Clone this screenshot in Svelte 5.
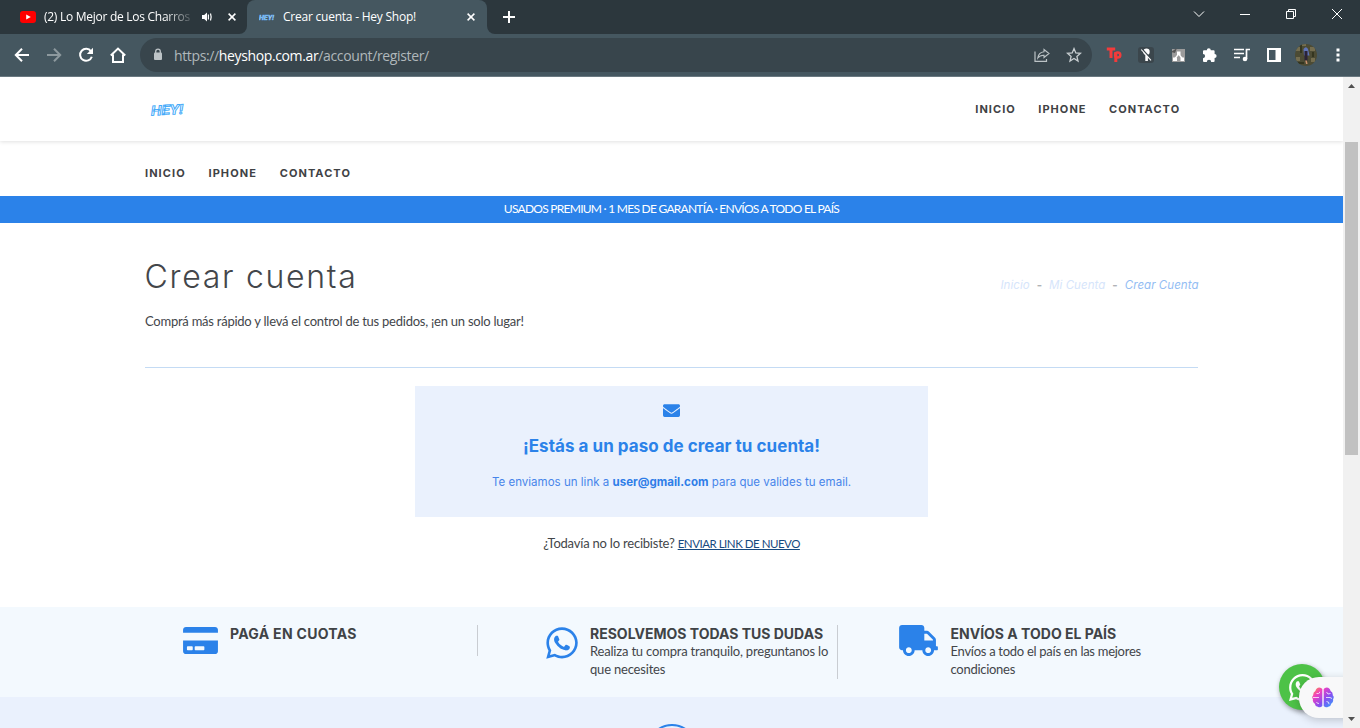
<script>
  const links = ['INICIO', 'IPHONE', 'CONTACTO'];

  const whatsapp = 'M380.9 97.1C339 55.1 283.2 32 223.9 32c-122.4 0-222 99.6-222 222 0 39.1 10.2 77.3 29.6 111L0 480l117.7-30.9c32.4 17.7 68.9 27 106.1 27h.1c122.3 0 224.1-99.6 224.1-222 0-59.3-25.2-115-67.1-157zm-157 341.6c-33.2 0-65.7-8.9-94-25.7l-6.7-4-69.8 18.3L72 359.2l-4.4-7c-18.5-29.4-28.2-63.3-28.2-98.2 0-101.7 82.8-184.5 184.6-184.5 49.3 0 95.6 19.2 130.4 54.1 34.8 34.9 56.2 81.2 56.1 130.5 0 101.8-84.9 184.6-186.6 184.6zm101.2-138.2c-5.5-2.8-32.8-16.2-37.9-18-5.1-1.9-8.8-2.8-12.5 2.8-3.7 5.6-14.3 18-17.6 21.8-3.2 3.7-6.5 4.2-12 1.4-32.6-16.3-54-29.1-75.5-66-5.7-9.8 5.7-9.1 16.3-30.3 1.8-3.7.9-6.9-.5-9.7-1.4-2.8-12.5-30.1-17.1-41.2-4.5-10.8-9.1-9.3-12.5-9.5-3.2-.2-6.9-.2-10.6-.2-3.7 0-9.7 1.4-14.8 6.9-5.1 5.6-19.4 19-19.4 46.3 0 27.3 19.9 53.7 22.6 57.4 2.8 3.7 39.1 59.7 94.8 83.8 35.2 15.2 49 16.5 66.6 13.9 10.7-1.6 32.8-13.4 37.4-26.4 4.6-13 4.6-24.1 3.2-26.4-1.3-2.5-5-3.9-10.5-6.6z';
  const card = 'M0 432c0 26.5 21.5 48 48 48h480c26.5 0 48-21.5 48-48V256H0v176zm192-68c0-6.6 5.4-12 12-12h136c6.6 0 12 5.4 12 12v40c0 6.6-5.4 12-12 12H204c-6.6 0-12-5.4-12-12v-40zm-128 0c0-6.6 5.4-12 12-12h72c6.6 0 12 5.4 12 12v40c0 6.6-5.4 12-12 12H76c-6.6 0-12-5.4-12-12v-40zM576 80v48H0V80c0-26.5 21.5-48 48-48h480c26.5 0 48 21.5 48 48z';
  const truck = 'M624 352h-16V243.9c0-12.7-5.1-24.9-14.1-33.9L494 110.1c-9-9-21.2-14.1-33.9-14.1H416V48c0-26.5-21.5-48-48-48H48C21.5 0 0 21.5 0 48v320c0 26.5 21.5 48 48 48h16c0 53 43 96 96 96s96-43 96-96h128c0 53 43 96 96 96s96-43 96-96h48c8.8 0 16-7.2 16-16v-32c0-8.8-7.2-16-16-16zM160 464c-26.5 0-48-21.5-48-48s21.5-48 48-48 48 21.5 48 48-21.5 48-48 48zm320 0c-26.5 0-48-21.5-48-48s21.5-48 48-48 48 21.5 48 48-21.5 48-48 48zm80-208H416V144h44.1l99.9 99.9V256z';
  const envelope = 'M502.3 190.8c3.9-3.1 9.7-.2 9.7 4.7V400c0 26.5-21.5 48-48 48H48c-26.5 0-48-21.5-48-48V195.6c0-5 5.7-7.8 9.7-4.7 22.4 17.4 52.1 39.5 154.1 113.6 21.1 15.4 56.7 47.8 92.2 47.6 35.7.3 72-32.8 92.3-47.6 102-74.1 131.6-96.3 154-113.7zM256 320c23.2.4 56.6-29.2 73.4-41.4 132.7-96.3 142.8-104.7 173.4-128.7 5.8-4.5 9.2-11.5 9.2-18.9v-19c0-26.5-21.5-48-48-48H48c-26.5 0-48 21.5-48 48v19c0 7.4 3.4 14.3 9.2 18.9 30.6 23.9 40.7 32.4 173.4 128.7 16.8 12.2 50.2 41.8 73.4 41.4z';
</script>

<div class="window">
  <div class="tabs">
    <div class="tab first">
      <svg width="16" height="12" viewBox="0 0 16 12"><rect width="16" height="12" rx="3" fill="#f00" /><path d="M6.2 3.4v5.2L10.8 6z" fill="#fff" /></svg>
      <span class="tabtitle fade">(2) Lo Mejor de Los Charros</span>
      <svg class="sound" width="12" height="12" viewBox="0 0 12 12"><path d="M1 4h2.200L6 1.400v9.200L3.200 8H1z" fill="#fff" /><path d="M7.400 3.500v5M9.500 2.500q1.300 3.500 0 7" fill="none" stroke="#fff" stroke-width="1.200" /></svg>
      <svg class="x1" width="8" height="8" viewBox="0 0 8 8"><path d="M.6.6l6.8 6.8M7.4.6L.6 7.4" stroke="#fff" stroke-width="1.5" /></svg>
    </div>
    <div class="tab active">
      <svg width="16" height="10" viewBox="0 0 16 10"><text x="0" y="7.500" class="favtext" textLength="15" lengthAdjust="spacingAndGlyphs">HEY!</text></svg>
      <span class="tabtitle second">Crear cuenta - Hey Shop!</span>
      <svg class="x2" width="8" height="8" viewBox="0 0 8 8"><path d="M.6.6l6.8 6.8M7.4.6L.6 7.4" stroke="#fff" stroke-width="1.5" /></svg>
    </div>
    <div class="rest">
      <svg width="12" height="12" viewBox="0 0 12 12"><path d="M6 0v12M0 6h12" stroke="#fff" stroke-width="2" /></svg>
      <div class="winctl">
        <svg width="12" height="28" viewBox="0 0 12 28"><path d="M1 11.5l5 5 5-5" fill="none" stroke="#fff" /></svg>
        <svg width="12" height="28" viewBox="0 0 12 28"><path d="M1 14.5h10" stroke="#fff" /></svg>
        <svg width="12" height="28" viewBox="0 0 12 28"><path d="M1.500 11.500h7v7h-7zM3.500 11.500V9.500h7v7h-2" fill="none" stroke="#fff" /></svg>
        <svg width="12" height="28" viewBox="0 0 12 28"><path d="M1 9l10 10M11 9L1 19" fill="none" stroke="#fff" /></svg>
      </div>
    </div>
  </div>

  <div class="toolbar">
    <div class="nav">
      <svg width="16" height="16" viewBox="0 0 16 16"><path d="M15 8H2M8 1.800L1.800 8 8 14.200" fill="none" stroke="#fff" stroke-width="2" /></svg>
      <svg width="16" height="16" viewBox="0 0 16 16"><path d="M1 8h13M8 1.800L14.200 8 8 14.200" fill="none" stroke="#8d999e" stroke-width="2" /></svg>
      <svg width="16" height="16" viewBox="0 0 16 16"><path d="M13 4.300A6 6 0 1 0 13.800 9.700" fill="none" stroke="#fff" stroke-width="2" /><path d="M15 .8v6.200H8.800z" fill="#fff" /></svg>
      <svg width="16" height="16" viewBox="0 0 16 16"><path d="M.8 8.500L8 1.600l7.200 6.900M3 7.500V15h10V7.500" fill="none" stroke="#fff" stroke-width="2" /></svg>
    </div>
    <div class="omnibox">
      <svg width="10" height="14" viewBox="0 0 10 14"><rect y="4.500" x="1" width="8" height="7.500" rx="1" fill="#bcc3c6" /><path d="M2.700 5V3.500a2.300 2.300 0 0 1 4.600 0V5" fill="none" stroke="#bcc3c6" stroke-width="1.300" /></svg>
      <span class="url">https://<b>heyshop.com.ar</b>/account/register/</span>
      <svg class="share" width="16" height="16" viewBox="0 0 16 16"><path d="M1 4.500V14.300h11.500V12" fill="none" stroke="#bcc3c6" stroke-width="1.200" /><path d="M10 2.500l5 4-5 4V8.200Q6 8 3.800 11 4.500 5.500 10 4.800z" fill="none" stroke="#bcc3c6" stroke-width="1.100" /></svg>
      <svg class="star" width="16" height="16" viewBox="0 0 16 16"><path d="M8 1.600l1.800 4.300 4.700.4-3.600 3.100 1.100 4.600L8 11.500 4 14l1.100-4.600L1.500 6.300l4.700-.4z" fill="none" stroke="#c8ced1" stroke-width="1.300" /></svg>
    </div>
    <div class="exts">
      <svg width="16" height="16" viewBox="0 0 16 16"><path d="M.8 2h8.400M5 2v9M9.800 15V5" fill="none" stroke="#f23b3b" stroke-width="3" /><circle cx="11.700" cy="8" r="2.600" fill="none" stroke="#f23b3b" stroke-width="2.500" /></svg>
      <svg width="16" height="16" viewBox="0 0 16 16"><rect width="16" height="16" rx="3" fill="#3b464c" /><circle cx="8.500" cy="4.800" r="3.200" fill="#fff" /><path d="M7.300 8h2.600v6H7.300z" fill="#fff" /><path d="M4.500 2.500l9 10" stroke="#3b464c" stroke-width="1.500" /><path d="M3.200 2.500l9.800 10.800" stroke="#fff" stroke-width="1.100" /></svg>
      <svg width="16" height="16" viewBox="0 0 16 16"><rect x="2" y="2" width="13" height="13" fill="#9b9b9b" /><path d="M1 5l6-4-2 5z" fill="#555" /><path d="M7 4.500h3.500v3.500H7zM3 10.500h4V14H3zM10.500 10.500h3.500V14h-3.500z" fill="#fff" /><path d="M8.700 7L5 11.500M8.700 7l3.500 4.500" stroke="#fff" stroke-width="1.300" /></svg>
      <svg width="16" height="16" viewBox="0 0 16 16"><path d="M1 4.200Q1 3.200 2 3.200h2.800a2 2 0 1 1 4 0H11.600q1 0 1 1V7a2 2 0 1 1 0 4v3q0 1-1 1H9.200a2.200 2.200 0 0 0-4.400 0H2q-1 0-1-1v-2.800a2.100 2.100 0 0 0 0-4.200z" fill="#fff" /></svg>
      <svg width="16" height="16" viewBox="0 0 16 16"><path d="M0 2.500h10M0 6.500h10M0 10.500h6M12.500 12V2.500H16" fill="none" stroke="#fff" stroke-width="1.700" /><circle cx="11" cy="12" r="2.300" fill="#fff" /></svg>
      <svg width="16" height="16" viewBox="0 0 16 16"><path fill-rule="evenodd" d="M1 1h14v14H1zM3 3v10h6.500V3z" fill="#fff" /></svg>
      <svg width="22" height="22" viewBox="0 0 22 22"><defs><clipPath id="av"><circle cx="11" cy="11" r="11" /></clipPath></defs><g clip-path="url(#av)"><rect width="22" height="22" fill="#4c4b34" /><path d="M0 3h5v4H0zM15 3h5v4h-5zM1 13h4v4H1zM16 14h4v4h-4zM7 0h4v2H7z" fill="#746d4f" /><path d="M5 0h2v9H5zM17 8h2v5h-2zM3 18h6v2H3z" fill="#34351f" /><path d="M8.500 5Q11 1.500 13 5l1.500 6.500H9z" fill="#5f74b8" /><path d="M9.500 7h3v9.500h-3z" fill="#2b2336" /><path d="M10.300 16.500h1.500l.8 3.500H11z" fill="#c9906d" /></g></svg>
      <svg class="dots" width="4" height="16" viewBox="0 0 4 16"><path d="M.5 1.500h3v3h-3zM.5 6.500h3v3h-3zM.5 11.500h3v3h-3z" fill="#fff" /></svg>
    </div>
  </div>

  <div class="body">
    <div class="page">
      <header>
        <svg width="36" height="18" viewBox="0 0 36 18"><text class="logo" x="1" y="14.500" transform="rotate(-3 18 9)" textLength="32" lengthAdjust="spacingAndGlyphs">HEY!</text></svg>
        <nav>{#each links as l}<a href="#top">{l}</a>{/each}</nav>
      </header>
      <nav class="sub">{#each links as l}<a href="#top">{l}</a>{/each}</nav>
      <div class="band"><span>USADOS PREMIUM · 1 MES DE GARANTÍA · ENVÍOS A TODO EL PAÍS</span></div>
      <main>
        <div class="heading">
          <h1>Crear cuenta</h1>
          <div class="crumbs"><span class="c1">Inicio</span><i>-</i><span class="c2">Mi Cuenta</span><i>-</i><span class="c3">Crear Cuenta</span></div>
        </div>
        <p class="lead">Comprá más rápido y llevá el control de tus pedidos, ¡en un solo lugar!</p>
        <div class="box">
          <svg width="17" height="17" viewBox="0 0 512 512"><path fill="#2b82e9" d={envelope} /></svg>
          <h2>¡Estás a un paso de crear tu cuenta!</h2>
          <p>Te enviamos un link a <b>user@gmail.com</b> para que valides tu email.</p>
        </div>
        <p class="again">¿Todavía no lo recibiste? <a href="#send">ENVIAR LINK DE NUEVO</a></p>
      </main>
      <section class="features">
        <div class="feature a">
          <div class="ico"><svg width="35" height="31" viewBox="0 0 576 512"><path fill="#2b82e9" d={card} /></svg></div>
          <div class="txt"><h3>PAGÁ EN CUOTAS</h3></div>
        </div>
        <div class="feature b">
          <div class="ico"><svg width="32" height="36" viewBox="0 0 448 512"><path fill="#2b82e9" d={whatsapp} /></svg></div>
          <div class="txt"><h3>RESOLVEMOS TODAS TUS DUDAS</h3><p>Realiza tu compra tranquilo, preguntanos lo<br />que necesites</p></div>
        </div>
        <div class="feature c">
          <div class="ico"><svg width="39" height="31" viewBox="0 0 640 512"><path fill="#2b82e9" d={truck} /></svg></div>
          <div class="txt"><h3>ENVÍOS A TODO EL PAÍS</h3><p>Envíos a todo el país en las mejores<br />condiciones</p></div>
        </div>
      </section>
      <section class="next"><div class="ring"></div></section>

      <div class="wa"><svg width="27" height="31" viewBox="0 0 448 512"><path fill="#fff" d={whatsapp} /></svg></div>
      <div class="pill">
        <svg width="22" height="21" viewBox="0 0 22 21">
          <defs><linearGradient id="br" x1="0" y1="0" x2="1" y2="1"><stop offset="0" stop-color="#ff9d2e" /><stop offset=".28" stop-color="#f13fc0" /><stop offset=".6" stop-color="#8a4df0" /><stop offset="1" stop-color="#27a8ff" /></linearGradient></defs>
          <path fill="url(#br)" d="M10.300 2v17q-2 2.200-4.500.8-2.600-.2-3-3Q.2 14.800 1 12.300-.6 10 1.200 8.200 1 5.200 3.400 4 4.300.6 7.300.5q2 0 3 1.500zM11.700 2v17q2 2.200 4.500.8 2.600-.2 3-3 2.600-2 1.800-4.500 1.600-2.300-.2-4.100.2-3-2.200-4.200Q17.700.6 14.700.5q-2 0-3 1.500z" />
          <path d="M1 10.500h6M4.500 6.500h2q1.200-.2 1.200-1.700M4.500 15q.5 1.700 2.500 1.500M14.500 5l1.500 2 2.500-.5M14 10.500h4l2 1M14.500 14.500l2 .7.500 2" fill="none" stroke="#fff" stroke-width=".9" opacity=".85" />
        </svg>
      </div>
    </div>
    <div class="scroll">
      <svg width="17" height="17" viewBox="0 0 17 17"><path d="M5 11l3.500-4L12 11z" fill="#505050" /></svg>
      <div class="thumb"></div>
      <svg class="down" width="17" height="17" viewBox="0 0 17 17"><path d="M5 6l3.500 4L12 6z" fill="#505050" /></svg>
    </div>
  </div>
</div>

<style>
  :global(body) { background: #fff; overflow: hidden; }
  * { box-sizing: border-box; }
  svg { display: block; flex: none; }
  h1, h2, h3, p { margin: 0; }
  .window { width: 1360px; height: 728px; display: flex; flex-direction: column; overflow: hidden; font-family: Lato, sans-serif; color: #43464a; }

  .tabs { height: 34px; flex: none; display: flex; align-items: center; font-family: "Open Sans", sans-serif; color: #fff; background: linear-gradient(#2c373d 50%, #455760 50%); }
  .tab { height: 34px; display: flex; align-items: center; flex: none; }
  .first { width: 247px; padding-left: 20px; background: #2c373d; border-radius: 0 0 8px 0; }
  .tabtitle { font-size: 12px; line-height: 16px; white-space: nowrap; overflow: hidden; }
  .fade { width: 148px; margin-left: 8px; letter-spacing: -0.27px; -webkit-mask-image: linear-gradient(90deg, #000 120px, transparent 152px); mask-image: linear-gradient(90deg, #000 120px, transparent 152px); }
  .sound { margin-left: 9px; }
  .x1 { margin-left: 15px; }
  .active { width: 240px; padding-left: 12px; background: #455760; border-radius: 8px 8px 0 0; }
  .favtext { font: italic 900 7px Roboto, sans-serif; fill: #a5d6ff; stroke: #5cabf0; stroke-width: .3px; }
  .second { margin-left: 8px; width: 160px; letter-spacing: -0.23px; }
  .x2 { margin-left: 24px; }
  .rest { flex: 1; height: 34px; padding-left: 16px; background: #2c373d; border-radius: 0 0 0 8px; display: flex; align-items: center; }
  .winctl { margin-left: auto; margin-right: 17px; display: flex; gap: 34px; height: 28px; align-self: flex-start; }

  .toolbar { height: 43px; flex: none; background: #455760; border-bottom: 1px solid #6a7981; display: flex; align-items: center; }
  .nav { display: flex; gap: 16px; padding-left: 14px; width: 140px; flex: none; }
  .omnibox { width: 952px; height: 34px; border-radius: 17px; background: #38454c; display: flex; align-items: center; padding: 0 10px 0 13px; flex: none; }
  .url { font: 14px/18px "Open Sans", sans-serif; color: #b0b8bb; margin: 1px 0 0 11px; letter-spacing: -0.37px; }
  .url b { font-weight: 400; color: #fff; }
  .share { margin-left: auto; }
  .star { margin-left: 16px; }
  .exts { display: flex; align-items: center; gap: 16px; padding-left: 14px; }
  .exts svg:nth-child(7) { margin: 0 -3px; }
  .exts .dots { margin-left: 6px; }

  .body { flex: 1; display: flex; min-height: 0; }
  .page { position: relative; width: 1343px; display: flex; flex-direction: column; background: #fff; overflow: hidden; }
  header { height: 64px; flex: none; display: flex; align-items: center; justify-content: space-between; padding: 0 162.800px 0 150px; box-shadow: 0 1px 4px rgba(0, 0, 0, .12); }
  .logo { font: italic 700 13.500px Roboto, sans-serif; fill: #fff; stroke: #45aaf9; stroke-width: .9px; }
  nav { display: flex; gap: 22.300px; }
  nav a { color: #3f4245; text-decoration: none; font: 700 11px/16px Inter, sans-serif; letter-spacing: 1.070px; }
  .sub { height: 55px; flex: none; padding: 24px 0 0 145px; gap: 22.800px; }
  .band { height: 27px; flex: none; background: #2b82e9; color: #fff; display: flex; align-items: center; justify-content: center; font-size: 12px; line-height: 16px; padding-bottom: 1px; letter-spacing: -0.74px; }
  main { height: 384px; flex: none; padding: 35px 145px 0; display: flex; flex-direction: column; align-items: center; }
  .heading { width: 1054px; height: 37px; display: flex; justify-content: space-between; }
  h1 { font: 300 32px/38px Inter, sans-serif; letter-spacing: 1.7px; }
  .crumbs { display: flex; font: italic 11.500px/16px Inter, sans-serif; padding-top: 19px; gap: 7px; letter-spacing: .05px; white-space: nowrap; }
  .crumbs i { font-style: normal; font-weight: 700; color: #b0b2b6; }
  .c1, .c2 { color: #d6e5fb; }
  .c3 { color: #93bdf3; }
  .lead { width: 1053px; height: 73px; padding-top: 17px; font-size: 13px; line-height: 18px; letter-spacing: -0.24px; border-bottom: 1px solid #c4dbf4; }
  .box { margin-top: 18px; width: 513px; height: 131px; background: #eaf1fd; color: #2b82e9; display: flex; flex-direction: column; align-items: center; padding-top: 16px; }
  h2 { font: 700 17px/24px Inter, sans-serif; margin-top: 15px; letter-spacing: .04px; }
  .box p { font: 11.500px/16px Inter, sans-serif; margin-top: 16px; color: #4785ea; letter-spacing: .02px; }
  .box b { color: #2f7de8; }
  .again { margin-top: 17px; font-size: 13px; line-height: 18px; white-space: nowrap; letter-spacing: -0.21px; }
  .again a { color: #174a80; font-size: 11.500px; letter-spacing: -0.48px; }

  .features { height: 90px; flex: none; background: #f3f9fe; padding: 18px 0 0 117px; display: flex; align-items: flex-start; }
  .feature { width: 361px; display: flex; border-right: 1px solid #c9cdd2; }
  .feature.b { width: 360px; }
  .feature.c { border: 0; }
  .ico { width: 40px; margin-left: 63px; height: 31px; display: flex; justify-content: center; flex: none; }
  .a .txt { margin-left: 10px; }
  .a h3 { letter-spacing: .3px; }
  .b .ico { margin-left: 64px; }
  .b .txt { margin-left: 8px; }
  .c .ico { margin-left: 60px; }
  .c .txt { margin-left: 12.500px; }
  h3 { font: 700 14px/18px Inter, sans-serif; color: #404346; white-space: nowrap; }
  .txt p { font-size: 13px; line-height: 18px; white-space: nowrap; letter-spacing: -0.19px; margin: -1px 0 1px; }
  .c .txt p { letter-spacing: -0.28px; }
  .next { height: 31px; flex: none; background: #eaf1fd; display: flex; justify-content: center; padding-top: 27px; overflow: hidden; }
  .ring { width: 50px; height: 50px; flex: none; border: 2px solid #2b82e9; border-radius: 50%; }

  .wa { position: absolute; left: 1279px; top: 587px; width: 46px; height: 46px; border-radius: 50%; background: #4dc247; box-shadow: 1px 2px 5px rgba(0, 0, 0, .4); display: flex; align-items: center; justify-content: center; }
  .pill { position: absolute; left: 1299px; top: 600px; width: 60px; height: 41px; border-radius: 20px 0 0 20px; background: #f8f8f9; box-shadow: 0 2px 8px rgba(0, 0, 0, .2); padding: 10px 0 0 13px; }

  .scroll { width: 17px; background: #f1f1f1; display: flex; flex-direction: column; align-items: center; }
  .thumb { margin-top: 48px; width: 13px; height: 313px; background: #c1c1c1; }
  .down { margin-top: auto; }
</style>
